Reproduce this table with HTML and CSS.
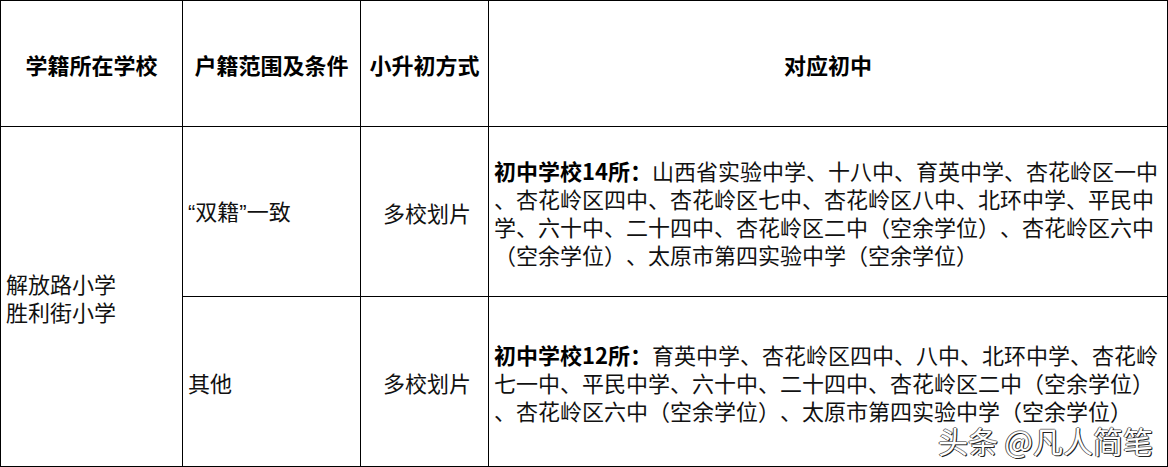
FILE: index.html
```html
<!DOCTYPE html>
<html lang="zh-CN">
<head>
<meta charset="utf-8">
<title>学籍划片</title>
<link rel="stylesheet" href="styles.css">
</head>
<body>
<table class="grid">
  <colgroup>
    <col class="c1"><col class="c2"><col class="c3"><col class="c4">
  </colgroup>
  <thead>
    <tr class="head">
      <th>学籍所在学校</th>
      <th>户籍范围及条件</th>
      <th>小升初方式</th>
      <th>对应初中</th>
    </tr>
  </thead>
  <tbody>
    <tr class="row">
      <td rowspan="2" class="school">解放路小学<br>胜利街小学</td>
      <td class="cond"><span class="q">“</span>双籍<span class="q">”</span>一致</td>
      <td class="mode">多校划片</td>
      <td class="list"><b>初中学校14所：</b>山西省实验中学、十八中、育英中学、杏花岭区一中<br>、杏花岭区四中、杏花岭区七中、杏花岭区八中、北环中学、平民中<br>学、六十中、二十四中、杏花岭区二中（空余学位）、杏花岭区六中<br>（空余学位）、太原市第四实验中学（空余学位）</td>
    </tr>
    <tr class="row">
      <td class="cond">其他</td>
      <td class="mode">多校划片</td>
      <td class="list last"><b>初中学校12所：</b>育英中学、杏花岭区四中、八中、北环中学、杏花岭<br>七一中、平民中学、六十中、二十四中、杏花岭区二中（空余学位）<br>、杏花岭区六中（空余学位）、太原市第四实验中学（空余学位）<span class="mark">头条 @凡人简笔</span></td>
    </tr>
  </tbody>
</table>
</body>
</html>
```
FILE: styles.css
```css
html, body {
  margin: 0;
  padding: 0;
  background: #fff;
}
body {
  font-family: "Noto Sans CJK SC", "Noto Sans", sans-serif;
  color: #111;
  width: 1168px;
  height: 467px;
  overflow: hidden;
}
.grid {
  border-collapse: collapse;
  table-layout: fixed;
  width: 1167px;
  font-size: 22px;
  line-height: 28px;
  text-spacing-trim: space-all;
  font-kerning: none;
}
.c1 { width: 182px; }
.c2 { width: 178px; }
.c3 { width: 128px; }
.c4 { width: 679px; }
.grid th, .grid td {
  border: 1px solid #000;
  padding: 0 0 0 5px;
  vertical-align: middle;
  white-space: nowrap;
}
.head { height: 126px; }
.head th {
  font-weight: 700;
  text-align: center;
  padding: 0;
  color: #000;
}
.row { height: 170px; }
.school { text-align: left; }
.cond { text-align: left; }
.mode { text-align: center; padding: 0; }
.list b { font-weight: 700; color: #000; }
.q { font-family: "Liberation Sans", sans-serif; }
.last { position: relative; }
.mark {
  position: absolute;
  right: 14px;
  bottom: 10px;
  font-size: 30px;
  line-height: 32px;
  font-weight: 400;
  color: #fff;
  text-shadow: 1px 1px 0 #222, -1px 0 0 #555, 0 -1px 0 #888, 1px 0 0 #444;
}
```
